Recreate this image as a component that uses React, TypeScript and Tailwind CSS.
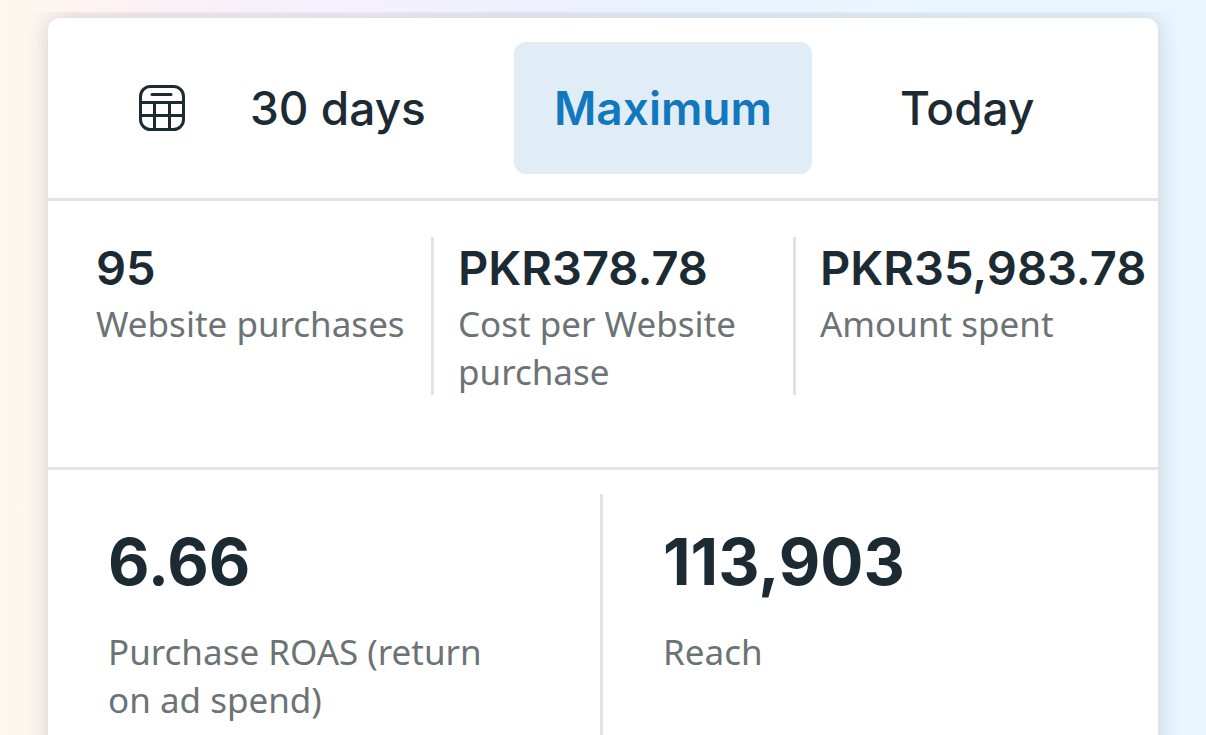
const summary = [
  { value: '95', label: 'Website purchases' },
  { value: 'PKR378.78', label: 'Cost per Website purchase' },
  { value: 'PKR35,983.78', label: 'Amount spent' },
];

const details = [
  { value: '6.66', label: 'Purchase ROAS (return on ad spend)' },
  { value: '113,903', label: 'Reach' },
];

function CalendarIcon() {
  return (
    <svg className="size-12 shrink-0" viewBox="0 0 48 48" fill="none" stroke="currentColor" strokeWidth="3" aria-hidden="true">
      <rect x="2.5" y="2.5" width="43" height="43" rx="10" />
      <path d="M14 10.5h19" strokeLinecap="round" />
      <path d="M2.5 18.5h43M2.5 31.5h43M16.5 18.5v27M31.5 18.5v27" />
    </svg>
  );
}

export default function App() {
  return (
    <main className="h-screen bg-[linear-gradient(to_right,#fef7ee_0%,#fcf2f5_11%,#f5f1fc_26%,#eff0fd_44%,#e9f3fd_56%,#eaf6ff_80%)] pt-3 font-['Noto_Sans',sans-serif] text-[#1c2b33]">
      <div className="h-full overflow-hidden px-12 pt-1.5">
        <section className="flex h-[calc(100%+24px)] flex-col rounded-t-xl bg-white shadow-[0_0_24px_rgba(0,0,0,0.16)]">
          <nav className="flex items-center gap-[88px] border-b-3 border-[#e2e3e5] px-[90px] py-6 font-['Inter',sans-serif] text-[46px] font-medium">
            <button className="flex h-[132px] shrink-0 items-center gap-16 whitespace-nowrap">
              <CalendarIcon />
              30 days
            </button>
            <button className="h-[132px] rounded-xl bg-[#e0edf6] px-10 font-semibold text-[#1278be]">Maximum</button>
            <button className="h-[132px]">Today</button>
          </nav>
          <dl className="flex border-b-3 border-[#e2e3e5] px-6 pt-9 pb-[72px]">
            {summary.map((s) => (
              <div key={s.label} className="flex h-[158px] w-[362px] shrink-0 flex-col-reverse justify-end gap-[3px] border-r-3 border-[#e2e3e5] px-6 pt-0.5 last:border-r-0">
                <dt className="text-[35px] leading-12 text-[#6c7375]">{s.label}</dt>
                <dd className="font-['Inter',sans-serif] text-[47px] leading-[58px] font-semibold">{s.value}</dd>
              </div>
            ))}
          </dl>
          <dl className="grid flex-1 grid-cols-2 pt-6">
            {details.map((d) => (
              <div key={d.label} className="flex flex-col-reverse justify-end gap-[26px] border-r-3 border-[#e2e3e5] pt-7 pr-24 pl-[60px] last:border-r-0">
                <dt className="text-[35px] leading-12 text-[#6c7375]">{d.label}</dt>
                <dd className="font-['Inter',sans-serif] text-[64px] leading-20 font-bold">{d.value}</dd>
              </div>
            ))}
          </dl>
        </section>
      </div>
    </main>
  );
}
